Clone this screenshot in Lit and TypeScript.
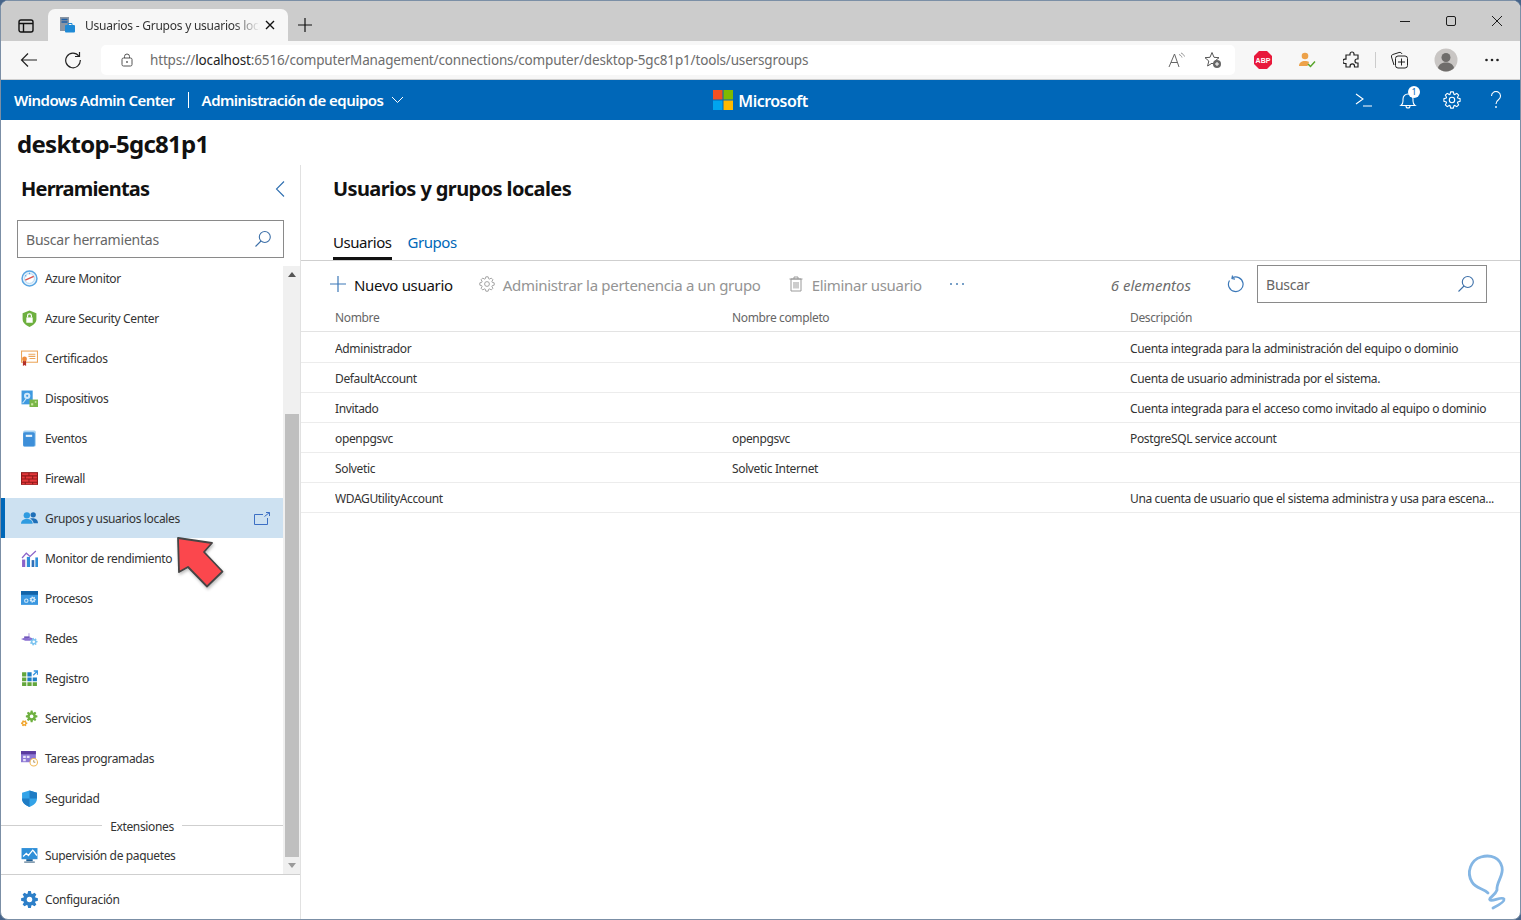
import { LitElement, html, css, svg } from "lit";
import { customElement } from "lit/decorators.js";

function gear(cx: number, cy: number, ro: number, ri: number, n: number) {
  const pts: string[] = [];
  const step = (Math.PI * 2) / n;
  for (let i = 0; i < n; i++) {
    const a = i * step;
    const p = (r: number, o: number) =>
      `${(cx + r * Math.cos(a + o)).toFixed(2)} ${(cy + r * Math.sin(a + o)).toFixed(2)}`;
    pts.push(p(ri, -step * 0.42), p(ro, -step * 0.2), p(ro, step * 0.2), p(ri, step * 0.42));
  }
  return "M" + pts.join("L") + "Z";
}

const icons: Record<string, unknown> = {
  monitor: svg`<circle cx="8" cy="8" r="7" fill="#e6f2fb" stroke="#59a5e2" stroke-width="1.400"/><circle cx="8" cy="8" r="4.600" fill="#fff" stroke="#a9d0ef" stroke-width=".8"/><path d="M4 9.500 12 6" stroke="#d9534f" stroke-width="1.300"/><path d="M4 5l1 1M8 2.600v1.400" stroke="#59a5e2"/>`,
  shield: svg`<path d="M8 .5 14.500 3v5.500c0 3.600-3 6-6.500 7.500-3.500-1.500-6.500-3.900-6.500-7.500V3Z" fill="#6eb03f"/><rect x="5" y="7" width="6" height="5" fill="#fff"/><path d="M6.200 7V5.400a1.800 1.800 0 0 1 3.600 0V7" fill="none" stroke="#fff" stroke-width="1.100"/>`,
  cert: svg`<rect x=".5" y="1" width="15" height="10.500" fill="#fff" stroke="#eba65b"/><path d="M7 4h6.500M7 6h6.500M8 8h5.500" stroke="#eba65b"/><path d="M1.800 9h3v6l-1.500-1-1.500 1Z" fill="#b3302a"/><circle cx="3.300" cy="8.500" r="2.300" fill="#ef8b3c"/>`,
  device: svg`<rect x=".5" y=".5" width="10.500" height="13" fill="#3f9ae0"/><circle cx="5.800" cy="5.500" r="3" fill="#cfe8fa"/><circle cx="5.800" cy="5.500" r="1" fill="#3f9ae0"/><path d="M1.500 12.500 5 8" stroke="#cfe8fa"/><rect x="8" y="9" width="8" height="7" fill="#7ab648"/><rect x="9.500" y="12.500" width="2" height="2" fill="#cfe8a8"/><rect x="13" y="10.500" width="1.500" height="1.500" fill="#cfe8a8"/>`,
  book: svg`<rect x="2" y=".5" width="12" height="15" rx="1.500" fill="#a9d3f2"/><rect x="2" y="2" width="11" height="13.500" rx="1.500" fill="#3d8fd9"/><rect x="4.500" y="4.500" width="6" height="2" fill="#e8f3fb"/>`,
  wall: svg`<rect x="0" y="2" width="16" height="12" fill="#8e1a1a"/><path d="M1 3h6v2H1ZM8 3h7v2H8ZM1 6h2.500v2H1ZM4.500 6h6v2h-6ZM11.500 6H15v2h-3.500ZM1 9h6v2H1ZM8 9h7v2H8ZM1 12h2.500v1.500H1ZM4.500 12h6v1.500h-6ZM11.500 12H15v1.500h-3.500Z" fill="#e5383b"/>`,
  users: svg`<circle cx="5.500" cy="5" r="3" fill="#2f9be0"/><path d="M0 13c0-3 2.200-4.500 5.500-4.500S11 10 11 13Z" fill="#2f9be0"/><circle cx="11.500" cy="4.500" r="2.500" fill="#1e6fb8"/><path d="M8.500 8.200c2-.8 7.500-.8 7.500 4.300h-4.200c0-1.800-1.300-3.500-3.300-4.300Z" fill="#1e6fb8"/>`,
  perf: svg`<rect x="1" y="9" width="3" height="7" fill="#8a63c8"/><rect x="5.500" y="6.500" width="3" height="9.500" fill="#2f8fd8"/><rect x="10" y="9.500" width="2.500" height="6.500" fill="#2f6fb8"/><rect x="13.500" y="7" width="2.500" height="9" fill="#2f8fd8"/><path d="M1 7.500 5 3l3.500 3L14 1" fill="none" stroke="#8a63c8" stroke-width="1.200"/>`,
  proc: svg`<rect x="0" y="1" width="16" height="13" fill="#3a97e0"/><rect x="0" y="1" width="16" height="3.500" fill="#1263a8"/><circle cx="5" cy="10" r="1.600" fill="none" stroke="#d8ecfa"/><path d="${gear(11, 9, 3, 2.1, 7)}" fill="#d8ecfa"/><circle cx="11" cy="9" r="1" fill="#3a97e0"/>`,
  net: svg`<path d="M0 8.500 4 7h5l3 1.500-3 1.500H4Z" fill="#8a6fd0"/><rect x="7" y="3" width="1" height="5" fill="#b3a1e2"/><rect x="3" y="6" width="5" height="1.500" fill="#6f55ba"/><path d="${gear(12, 11, 3.6, 2.5, 7)}" fill="#7cc4f0"/><circle cx="12" cy="11" r="1.200" fill="#fff"/>`,
  reg: svg`<path d="M1 2h4v4H1ZM1 7h4v3.500H1ZM1 11.500h4V15H1ZM6 11.500h4V15H6ZM11 11.500h4V15h-4Z" fill="#63a63c"/><path d="M6 2h4v4H6ZM6 7h4v3.500H6ZM11 7h4v3.500h-4Z" fill="#1f7ec4"/><path d="M11.500 5 15 1.500M12 1h3.500v3.500" fill="none" stroke="#3a97e0" stroke-width="1.300"/>`,
  svc: svg`<path d="${gear(10, 6, 5.5, 3.9, 8)}" fill="#6eb03f"/><circle cx="10" cy="6" r="1.700" fill="#fff"/><path d="${gear(3, 12.5, 3, 2.1, 6)}" fill="#f0a52e"/><circle cx="3" cy="12.500" r="1" fill="#fff"/>`,
  task: svg`<rect x="0" y="1" width="14" height="10.500" fill="#8d78d4"/><rect x="0" y="1" width="14" height="3" fill="#5b3b9f"/><path d="M2 5.500h2.500v2H2ZM5.500 5.500H8v2H5.500ZM2 8.500h2.500v2H2Z" fill="#e8e2f8"/><circle cx="12" cy="11.500" r="3.500" fill="#fff" stroke="#f0b95a"/><path d="M12 9.500v2h1.500" fill="none" stroke="#a8864a" stroke-width=".8"/>`,
  sec: svg`<path d="M8 .5 15 2.500v6c0 3.500-3.200 6-7 7.500-3.800-1.500-7-4-7-7.500v-6Z" fill="#33a3e8"/><path d="M8 .5 15 2.500v5.500H8Z" fill="#1f7cc4"/><path d="M8 8H1v.500c0 3.500 3.200 6 7 7.500Z" fill="#1f7cc4"/>`,
  pkg: svg`<rect x=".5" y="1" width="15" height="10.500" fill="#2f8fd8"/><path d="M2 9l3-3 2 2 4-5 1 1 3 4" fill="none" stroke="#fff" stroke-width="1.200"/><rect x="5" y="11.500" width="6" height="2" fill="#1e5f95"/><rect x="3" y="13.500" width="10" height="1.500" fill="#7f98ad"/>`,
  cfg: svg`<path d="${gear(8, 8, 8, 5.8, 8)}" fill="#2d7fc8"/><circle cx="8" cy="8" r="2.600" fill="#fff"/>`,
};

const nav = [
  ["monitor", "Azure Monitor"],
  ["shield", "Azure Security Center"],
  ["cert", "Certificados"],
  ["device", "Dispositivos"],
  ["book", "Eventos"],
  ["wall", "Firewall"],
  ["users", "Grupos y usuarios locales"],
  ["perf", "Monitor de rendimiento"],
  ["proc", "Procesos"],
  ["net", "Redes"],
  ["reg", "Registro"],
  ["svc", "Servicios"],
  ["task", "Tareas programadas"],
  ["sec", "Seguridad"],
];

const rows = [
  ["Administrador", "", "Cuenta integrada para la administración del equipo o dominio"],
  ["DefaultAccount", "", "Cuenta de usuario administrada por el sistema."],
  ["Invitado", "", "Cuenta integrada para el acceso como invitado al equipo o dominio"],
  ["openpgsvc", "openpgsvc", "PostgreSQL service account"],
  ["Solvetic", "Solvetic Internet", ""],
  ["WDAGUtilityAccount", "", "Una cuenta de usuario que el sistema administra y usa para escena..."],
];

const searchIcon = html`<svg class="sicon" viewBox="0 0 18 18" width="18" height="18"><circle cx="10.800" cy="7" r="5.500" fill="none" stroke="#3c6fa8" stroke-width="1.100"/><path d="M7 11 1.500 16.500" stroke="#3c6fa8" stroke-width="1.100"/></svg>`;

@customElement("app-root")
export class AppRoot extends LitElement {
  static styles = css`
    :host {
      display: block;
      width: 1521px;
      height: 920px;
      background: #46648a;
      overflow: hidden;
      font-family: "Noto Sans", "Open Sans", sans-serif;
      color: #222;
      --sp: -0.035em;
    }
    * { box-sizing: border-box; }
    svg { display: block; flex: none; }
    .window {
      position: relative;
      height: 920px;
      border: 1px solid #7b8fa6;
      border-radius: 8px;
      overflow: hidden;
      background: #fff;
      display: flex;
      flex-direction: column;
    }
    .tabs {
      height: 40px;
      flex: none;
      background: #cccccc;
      display: flex;
      align-items: flex-end;
      padding-left: 47px;
    }
    .panebtn { position: absolute; left: 17px; top: 17px; }
    .tab {
      width: 240px;
      height: 32px;
      background: #f7f7f7;
      border-radius: 7px 7px 0 0;
      display: flex;
      align-items: center;
      padding-left: 12px;
      font-size: 12px;
      letter-spacing: -0.02em;
      color: #333;
    }
    .tabtitle {
      width: 175px;
      margin-left: 10px;
      white-space: nowrap;
      overflow: hidden;
      -webkit-mask-image: linear-gradient(90deg, #000 85%, transparent);
      mask-image: linear-gradient(90deg, #000 85%, transparent);
    }
    .tabx { margin-left: 5px; }
    .plus { margin: 0 0 8px 9px; }
    .winbtns {
      margin-left: auto;
      align-self: flex-start;
      display: flex;
      gap: 34px;
      padding: 14px 17px 0 0;
    }
    .toolbar {
      height: 39px;
      flex: none;
      background: #f7f7f7;
      border-bottom: 1px solid #cfcfcf;
      display: flex;
      align-items: center;
      padding-left: 19px;
    }
    .tbicon { width: 18px; }
    .reload { margin-left: 26px; }
    .address {
      margin-left: 19px;
      width: 1134px;
      height: 30px;
      margin-top: -1px;
      background: #fff;
      border-radius: 5px;
      display: flex;
      align-items: center;
      padding-left: 20px;
      font-size: 13.5px;
      letter-spacing: -0.012em;
      color: #6d6d6d;
    }
    .address .host { color: #1f1f1f; }
    .url { margin-left: 17px; white-space: nowrap; }
    .addr-right { margin-left: auto; display: flex; gap: 18px; padding-right: 13px; align-items: center; }
    .ext { display: flex; align-items: center; margin-left: 18px; }
    .e-person { margin-left: 25px; }
    .e-puzzle { margin-left: 27px; }
    .e-sep { width: 1px; height: 16px; background: #ccc; margin-left: 14px; }
    .e-coll { margin-left: 14px; }
    .e-avatar, .e-more { margin-left: 26px; }
    .appbar {
      height: 40px;
      flex: none;
      background: #0067b8;
      color: #fff;
      display: grid;
      grid-template-columns: 1fr auto 1fr;
      align-items: center;
      font-weight: 600;
      font-size: 15px;
      letter-spacing: var(--sp);
    }
    .bar-left { display: flex; align-items: center; padding-left: 13px; }
    .bar-sep { width: 1px; height: 16px; background: #fff; margin: 0 13px; }
    .chev { margin-left: 8px; }
    .ms { display: flex; align-items: center; gap: 5px; font-size: 16px; }
    .ms span { padding-top: 2px; }
    .bar-right { display: flex; justify-content: flex-end; align-items: center; padding-right: 2px; }
    .cell { width: 44px; display: flex; justify-content: center; }
    .bell { position: relative; }
    .badge {
      position: absolute;
      left: 9px;
      top: -5px;
      width: 12px;
      height: 12px;
      border-radius: 50%;
      background: #fff;
      color: #0067b8;
      font-size: 9px;
      line-height: 12px;
      text-align: center;
      font-weight: 400;
      letter-spacing: 0;
    }
    .pagetitle {
      height: 45px;
      flex: none;
      padding: 7px 0 0 16px;
      font-size: 24px;
      line-height: 34px;
      font-weight: 700;
      color: #111;
      letter-spacing: -0.03em;
    }
    .body { flex: 1; display: flex; min-height: 0; }
    .side {
      width: 300px;
      flex: none;
      border-right: 1px solid #e1e1e1;
      display: flex;
      flex-direction: column;
    }
    .side-head {
      height: 55px;
      flex: none;
      padding: 8px 15px 0 20px;
      display: flex;
      justify-content: space-between;
      align-items: flex-start;
    }
    h2 {
      margin: 0;
      font-size: 20px;
      line-height: 32px;
      font-weight: 700;
      color: #111;
      letter-spacing: -0.04em;
    }
    .main-title h2 { letter-spacing: -0.03em; }
    .side-head svg { margin-top: 8px; }
    .search {
      border: 1px solid #8a8a8a;
      height: 38px;
      display: flex;
      align-items: center;
      justify-content: space-between;
      padding: 0 11px 0 8px;
      font-size: 14px;
      color: #666;
      letter-spacing: -0.015em;
    }
    .side .search { width: 267px; margin-left: 16px; flex: none; }
    .listwrap { flex: 1; display: flex; min-height: 0; }
    .list { width: 282px; flex: none; }
    .item {
      height: 40px;
      display: flex;
      align-items: center;
      padding-left: 20px;
      font-size: 12px;
      color: #333;
      letter-spacing: -0.03em;
    }
    .item .label { margin-left: 7px; }
    .item.sel {
      background: #cde1f1;
      border-left: 4px solid #0067b8;
      padding-left: 16px;
    }
    .item .open { margin-left: auto; margin-right: 13px; }
    .extsep {
      height: 17px;
      display: flex;
      align-items: flex-start;
      font-size: 12px;
      line-height: 18px;
      color: #333;
      letter-spacing: -0.03em;
      gap: 8px;
    }
    .extsep::before, .extsep::after {
      content: "";
      flex: 1;
      height: 1px;
      margin-top: 7px;
      background: #cfcfcf;
    }
    .scroll {
      width: 17px;
      margin-top: 8px;
      background: #f0f0f0;
      display: flex;
      flex-direction: column;
      align-items: center;
    }
    .arrow { height: 0; width: 0; border: 4px solid transparent; margin-top: 6px; }
    .arrow.up { border-top: 0; border-bottom: 5px solid #555; }
    .arrow.down { border-bottom: 0; border-top: 5px solid #9a9a9a; margin: 6px 0; }
    .thumbtrack { flex: 1; width: 14px; display: flex; flex-direction: column; justify-content: flex-end; }
    .thumb { height: 443px; background: #bfbfbf; }
    .side-foot {
      height: 45px;
      flex: none;
      border-top: 1px solid #cfcfcf;
      display: flex;
      align-items: center;
      padding: 5px 0 0 20px;
      font-size: 12px;
      color: #333;
      letter-spacing: -0.03em;
    }
    .side-foot span { margin-left: 7px; }
    .main { flex: 1; min-width: 0; display: flex; flex-direction: column; }
    .main-title { padding: 8px 0 0 32px; height: 55px; flex: none; }
    .tabsrow {
      height: 41px;
      flex: none;
      border-bottom: 1px solid #cfcfcf;
      padding-left: 32px;
      display: flex;
      gap: 16px;
      font-size: 15px;
      letter-spacing: -0.03em;
    }
    .t { height: 40px; padding-top: 9px; line-height: 26px; color: #0067b8; }
    .t.on { color: #111; border-bottom: 3px solid #111; }
    .cmd {
      height: 45px;
      flex: none;
      display: flex;
      align-items: center;
      padding-left: 29px;
      font-size: 15px;
      letter-spacing: -0.02em;
      color: #111;
    }
    .c { display: flex; align-items: center; gap: 8px; }
    .c span { padding-top: 3px; }
    .c.dis { color: #949494; }
    .c.gear { margin-left: 26px; }
    .c.del { margin-left: 27px; }
    .dots { margin-left: 27px; }
    .count { margin-left: auto; font-style: italic; color: #6d6d6d; letter-spacing: 0; padding-top: 3px; }
    .rf { margin-left: 36px; margin-right: 12px; }
    .cmd .search { width: 230px; margin-right: 33px; font-size: 14px; letter-spacing: -0.015em; }
    .cmd .search span { padding-top: 1px; }
    .grid {
      display: grid;
      grid-template-columns: 397px 398px 1fr;
      padding-left: 34px;
      align-items: center;
      font-size: 12px;
      letter-spacing: -0.03em;
    }
    .ghead { height: 26px; margin-bottom: 1px; padding-bottom: 2px; color: #666; border-bottom: 1px solid #e3e3e3; }
    .grow { height: 30px; padding-top: 2px; color: #333; border-bottom: 1px solid #ececec; }
    .grow div { white-space: nowrap; overflow: hidden; }
    .cursor { position: absolute; left: -1px; top: -1px; pointer-events: none; }
  `;

  render() {
    const w = "#1d1d1d";
    return html`
      <div class="window">
        <div class="tabs">
          <svg class="panebtn" width="16" height="16" viewBox="0 0 16 16"><rect x="1" y="2" width="14" height="12" rx="2" fill="none" stroke="#111" stroke-width="1.400"/><path d="M1 5.500h14M5.500 5.500V14" stroke="#111" stroke-width="1.400"/></svg>
          <div class="tab">
            <svg width="15" height="16" viewBox="0 0 15 16"><rect x="0" y="0" width="9" height="14" fill="#8a95a3"/><path d="M1.500 2.500h6M1.500 5h6" stroke="#1d5fa8" stroke-width="1.400"/><rect x="5" y="8" width="10" height="7.500" rx="1" fill="#1e8ad6"/><path d="M8 8V6.500h4V8" fill="none" stroke="#1e8ad6"/></svg>
            <div class="tabtitle">Usuarios - Grupos y usuarios locales</div>
            <svg class="tabx" width="10" height="10" viewBox="0 0 10 10"><path d="M1 1l8 8M9 1l-8 8" stroke="#111" stroke-width="1.400"/></svg>
          </div>
          <svg class="plus" width="16" height="16" viewBox="0 0 16 16"><path d="M8 1v14M1 8h14" stroke="#111" stroke-width="1.200"/></svg>
          <div class="winbtns">
            <svg width="12" height="12" viewBox="0 0 12 12"><path d="M1 6.500h10" stroke="${w}"/></svg>
            <svg width="12" height="12" viewBox="0 0 12 12"><rect x="1.500" y="1.500" width="9" height="9" rx="1.500" fill="none" stroke="${w}"/></svg>
            <svg width="12" height="12" viewBox="0 0 12 12"><path d="M1 1l10 10M11 1 1 11" stroke="${w}"/></svg>
          </div>
        </div>
        <div class="toolbar">
          <svg class="tbicon" width="18" height="18" viewBox="0 0 18 18"><path d="M17 9H1.500M8 2.500 1.500 9 8 15.500" fill="none" stroke="#222" stroke-width="1.200"/></svg>
          <svg class="reload" width="18" height="18" viewBox="0 0 18 18"><path d="M14.800 5A7.300 7.300 0 1 0 16.300 9" fill="none" stroke="#222" stroke-width="1.200"/><path d="M15.500 1v4.500H11" fill="none" stroke="#222" stroke-width="1.200"/></svg>
          <div class="address">
            <svg width="12" height="14" viewBox="0 0 12 14"><rect x="1" y="5" width="10" height="8" rx="1.500" fill="none" stroke="#555"/><path d="M3.500 5V3.500a2.500 2.500 0 0 1 5 0V5" fill="none" stroke="#555"/><circle cx="6" cy="9" r=".9" fill="#555"/></svg>
            <span class="url">https://<span class="host">localhost</span>:6516/computerManagement/connections/computer/desktop-5gc81p1/tools/usersgroups</span>
            <div class="addr-right">
              <svg width="18" height="16" viewBox="0 0 18 16"><path d="M1 15 6.500 2 11 15M3 10.500h6.500" fill="none" stroke="#666"/><path d="M11 2.500c1.500.5 2.500 1.500 3 3M13 1c1.600.5 3 2 3.500 3.500" fill="none" stroke="#888" stroke-width=".9"/></svg>
              <svg width="18" height="18" viewBox="0 0 18 18"><path d="M8 1.500 10 6.300l5 .4-3.800 3.200 1.200 5L8 12.200 3.600 15l1.200-5L1 6.700l5-.4Z" fill="none" stroke="#555"/><circle cx="13" cy="13" r="4" fill="#666"/><path d="M13 11v4M11 13h4" stroke="#fff"/></svg>
            </div>
          </div>
          <div class="ext">
            <svg width="20" height="20" viewBox="0 0 20 20"><path d="M6 1h8l5 5v8l-5 5H6l-5-5V6Z" fill="#e8193c"/><text x="10" y="13" font-size="7" font-weight="700" fill="#fff" text-anchor="middle" font-family="Liberation Sans">ABP</text></svg>
            <svg class="e-person" width="18" height="18" viewBox="0 0 18 18"><circle cx="7" cy="5" r="3.300" fill="#eda24a"/><path d="M1 15c0-3.500 2.500-5 6-5 1.500 0 3 .4 4 1l-1.500 4Z" fill="#eda24a"/><path d="M10 13l2.500 2.500L17 10.500" fill="none" stroke="#59a52c" stroke-width="1.500"/></svg>
            <svg class="e-puzzle" width="18" height="18" viewBox="0 0 18 18"><path d="M7 3a2 2 0 0 1 4 0v1h4v4h-1a2 2 0 0 0 0 4h1v4h-3.500v-1a2.200 2.200 0 0 0-4.400 0v1H3v-3.500H2a2.200 2.200 0 0 1 0-4.400h1V4h4Z" fill="none" stroke="#222" stroke-width="1.200"/></svg>
            <div class="e-sep"></div>
            <svg class="e-coll" width="18" height="18" viewBox="0 0 18 18"><path d="M4 14 1.500 6a2 2 0 0 1 1.300-2.500L9 1.500c1.500-.4 2.500.3 3 1.500" fill="none" stroke="#222"/><rect x="5.500" y="5" width="12" height="12" rx="2.500" fill="#f7f7f7" stroke="#222"/><path d="M11.500 7.500v7M8 11h7" stroke="#222"/></svg>
            <svg class="e-avatar" width="24" height="24" viewBox="0 0 24 24"><circle cx="12" cy="12" r="11.500" fill="#c9c6c4"/><circle cx="12" cy="9.500" r="4.500" fill="#6f6d6b"/><path d="M4 20c1-4 4-5.500 8-5.500s7 1.500 8 5.500a11 11 0 0 1-16 0Z" fill="#6f6d6b"/></svg>
            <svg class="e-more" width="16" height="4" viewBox="0 0 16 4"><circle cx="2.500" cy="2" r="1.300" fill="#222"/><circle cx="8" cy="2" r="1.300" fill="#222"/><circle cx="13.500" cy="2" r="1.300" fill="#222"/></svg>
          </div>
        </div>
        <div class="appbar">
          <div class="bar-left">
            <span>Windows Admin Center</span><span class="bar-sep"></span><span>Administración de equipos</span>
            <svg class="chev" width="13" height="8" viewBox="0 0 13 8"><path d="M1 1l5.500 5.500L12 1" fill="none" stroke="#fff"/></svg>
          </div>
          <div class="ms">
            <svg width="20" height="20" viewBox="0 0 20 20"><rect width="9.500" height="9.500" fill="#f25022"/><rect x="10.500" width="9.500" height="9.500" fill="#7fba00"/><rect y="10.500" width="9.500" height="9.500" fill="#00a4ef"/><rect x="10.500" y="10.500" width="9.500" height="9.500" fill="#ffb900"/></svg>
            <span>Microsoft</span>
          </div>
          <div class="bar-right">
            <div class="cell"><svg width="18" height="14" viewBox="0 0 18 14"><path d="M1 1l7 5-7 5M8 13h9" fill="none" stroke="#fff" stroke-width="1.100"/></svg></div>
            <div class="cell"><div class="bell">
              <svg width="18" height="18" viewBox="0 0 18 18"><path d="M2 14.500c1.500-1 2-2 2-4.500V8a5 5 0 0 1 10 0v2c0 2.500.5 3.500 2 4.500ZM7 15a2 2 0 0 0 4 0" fill="none" stroke="#fff" stroke-width="1.100"/></svg>
              <span class="badge">1</span>
            </div></div>
            <div class="cell"><svg width="18" height="18" viewBox="0 0 18 18"><path d="${gear(9, 9, 8.2, 6.1, 8)}" fill="none" stroke="#fff" stroke-width="1.100"/><circle cx="9" cy="9" r="2.700" fill="none" stroke="#fff" stroke-width="1.100"/></svg></div>
            <div class="cell"><svg width="12" height="18" viewBox="0 0 12 18"><path d="M1.500 5a4.500 4.500 0 1 1 7 3.700C7 9.800 6 10.500 6 13" fill="none" stroke="#fff" stroke-width="1.100"/><circle cx="6" cy="16" r=".9" fill="#fff"/></svg></div>
          </div>
        </div>
        <div class="pagetitle">desktop-5gc81p1</div>
        <div class="body">
          <div class="side">
            <div class="side-head">
              <h2>Herramientas</h2>
              <svg width="10" height="16" viewBox="0 0 10 16"><path d="M9 .5 1.500 8 9 15.500" fill="none" stroke="#2f6fb0" stroke-width="1.100"/></svg>
            </div>
            <div class="search"><span>Buscar herramientas</span>${searchIcon}</div>
            <div class="listwrap">
              <div class="list">
                ${nav.map(
                  ([i, t]) => html`<div class="item ${i === "users" ? "sel" : ""}">
                    <svg width="17" height="17" viewBox="0 0 16 16">${icons[i]}</svg>
                    <span class="label">${t}</span>
                    ${i === "users"
                      ? html`<svg class="open" width="16" height="13" viewBox="0 0 16 13"><path d="M9 2.500H.5v10h13V6M10.500 4.500 15.500.5M12 .5h3.500V4" fill="none" stroke="#3c6fc4"/></svg>`
                      : ""}
                  </div>`
                )}
                <div class="extsep">Extensiones</div>
                <div class="item">
                  <svg width="17" height="17" viewBox="0 0 16 16">${icons.pkg}</svg>
                  <span class="label">Supervisión de paquetes</span>
                </div>
              </div>
              <div class="scroll">
                <div class="arrow up"></div>
                <div class="thumbtrack"><div class="thumb"></div></div>
                <div class="arrow down"></div>
              </div>
            </div>
            <div class="side-foot">
              <svg width="17" height="17" viewBox="0 0 16 16">${icons.cfg}</svg>
              <span>Configuración</span>
            </div>
          </div>
          <div class="main">
            <div class="main-title"><h2>Usuarios y grupos locales</h2></div>
            <div class="tabsrow"><div class="t on">Usuarios</div><div class="t">Grupos</div></div>
            <div class="cmd">
              <div class="c">
                <svg width="16" height="16" viewBox="0 0 16 16"><path d="M8 0v16M0 8h16" stroke="#3c78b8" stroke-width="1.200"/></svg>
                <span>Nuevo usuario</span>
              </div>
              <div class="c dis gear">
                <svg width="16" height="16" viewBox="0 0 18 18"><path d="${gear(9, 9, 8.2, 6.1, 8)}" fill="none" stroke="#9a9a9a"/><circle cx="9" cy="9" r="2.700" fill="none" stroke="#9a9a9a"/></svg>
                <span>Administrar la pertenencia a un grupo</span>
              </div>
              <div class="c dis del">
                <svg width="16" height="16" viewBox="0 0 16 16"><path d="M3 3h10v12H3ZM1.500 3h13M6 3V1h4v2M6 6v6.500M8 6v6.500M10 6v6.500" fill="none" stroke="#9a9a9a"/></svg>
                <span>Eliminar usuario</span>
              </div>
              <svg class="dots" width="16" height="4" viewBox="0 0 16 4"><circle cx="2" cy="2" r="1" fill="#4a7fb5"/><circle cx="8" cy="2" r="1" fill="#4a7fb5"/><circle cx="14" cy="2" r="1" fill="#4a7fb5"/></svg>
              <span class="count">6 elementos</span>
              <svg class="rf" width="18" height="18" viewBox="0 0 18 18"><path d="M5 3A7.300 7.300 0 1 1 2.500 5.500" fill="none" stroke="#3c78b8" stroke-width="1.200"/><path d="M5.500 .5 5 3.500l3 .7" fill="none" stroke="#3c78b8" stroke-width="1.200"/></svg>
              <div class="search"><span>Buscar</span>${searchIcon}</div>
            </div>
            <div class="grid ghead"><div>Nombre</div><div>Nombre completo</div><div>Descripción</div></div>
            ${rows.map((r) => html`<div class="grid grow"><div>${r[0]}</div><div>${r[1]}</div><div>${r[2]}</div></div>`)}
          </div>
        </div>
        <svg class="cursor" width="1521" height="920" viewBox="0 0 1521 920">
          <defs><filter id="sh" x="-20%" y="-20%" width="140%" height="140%"><feDropShadow dx="1" dy="2" stdDeviation="1.500" flood-color="#000" flood-opacity=".25"/></filter></defs>
          <path d="M178 538 212 543 204 552 222.500 571.500 207 586.500 188 567 179 572Z" fill="#fb474d" stroke="#444" stroke-width="1.800" stroke-linejoin="round" filter="url(#sh)"/>
          <path d="M1488 893C1483 888 1476 889 1472 882C1466 872 1471 860 1481 857C1491 854 1500 858 1502 867C1504 876 1496 882 1497 890C1495 896 1488 898 1490 900C1492 902 1502 896 1504 899C1505 902 1497 906 1493 908" fill="none" stroke="#84b6e4" stroke-width="2.800" stroke-linecap="round" stroke-linejoin="round"/>
        </svg>
      </div>
    `;
  }
}
